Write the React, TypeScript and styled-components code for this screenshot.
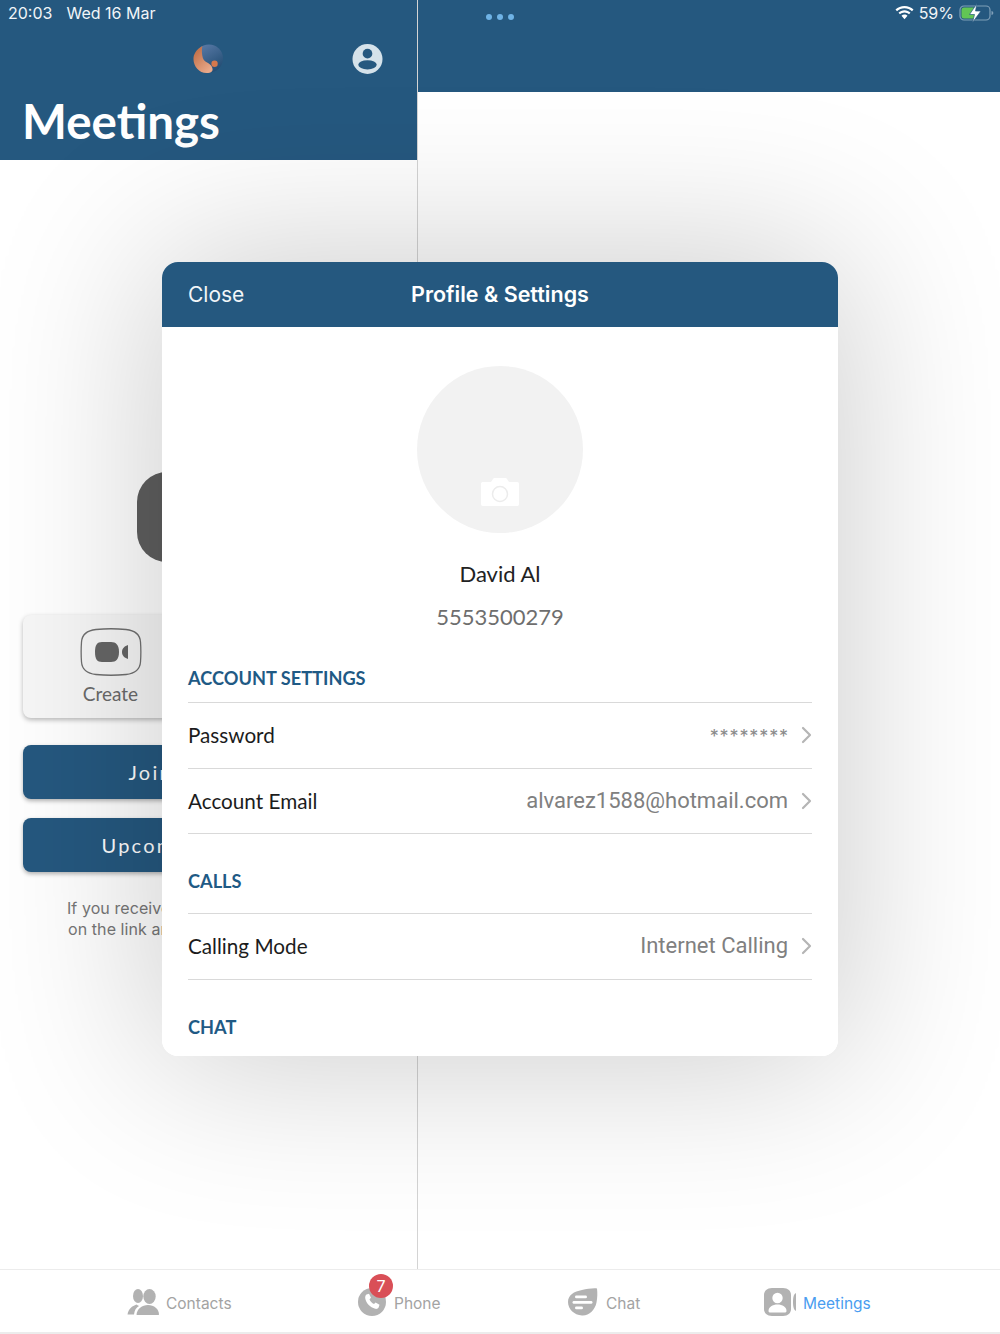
import React from 'react';
import styled, {createGlobalStyle} from 'styled-components';

const BLUE = '#25587f';
const HEADING = '#1f5a85';

const GlobalStyle = createGlobalStyle`
  html, body {
    margin: 0;
    padding: 0;
    background: #fff;
  }
  body {
    font-family: "Lato", "Liberation Sans", sans-serif;
  }
`;

const Screen = styled.div`
  position: relative;
  width: 1000px;
  height: 1334px;
  overflow: hidden;
  background: #fff;
  display: flex;
  flex-direction: column;
`;

const Split = styled.div`
  flex: 1;
  display: flex;
  min-height: 0;
`;

const LeftPane = styled.section`
  width: 417px;
  border-right: 1px solid #d4d4d4;
  display: flex;
  flex-direction: column;
`;

const RightPane = styled.section`
  flex: 1;
`;

const RightHeader = styled.div`
  height: 92px;
  background: ${BLUE};
`;

const LeftHeader = styled.header`
  height: 160px;
  background: ${BLUE};
  box-sizing: border-box;
  padding: 43px 34px 0 22px;
  display: flex;
  flex-direction: column;
`;

const HeaderIcons = styled.div`
  display: flex;
  justify-content: space-between;
  align-items: center;
  padding-left: 171px;
  height: 32px;
`;

const Title = styled.h1`
  margin: 17px 0 0;
  font: 700 47.500px/58px "Lato", sans-serif;
  color: #fff;
`;

const LeftBody = styled.div`
  flex: 1;
  display: flex;
  flex-direction: column;
  align-items: center;
  padding: 312px 23px 0;
`;

const Hero = styled.div`
  width: 143px;
  height: 90px;
  border-radius: 30px;
  background: #5f5f5f;
  margin-left: -1px;
`;

const CreateCard = styled.div`
  align-self: stretch;
  height: 103px;
  margin-top: 53px;
  border-radius: 8px;
  background: #f7f7f7;
  box-shadow: 0 2px 5px rgba(0, 0, 0, 0.28);
  display: flex;
  flex-direction: column;
  align-items: center;
  padding: 13px 196px 0 0;
  box-sizing: border-box;
`;

const CreateLabel = styled.span`
  margin-top: 6px;
  font: 400 19px/24px "Lato", sans-serif;
  color: #6b6b6b;
`;

const BlueButton = styled.div<{$top: number}>`
  align-self: stretch;
  height: 54px;
  margin-top: ${(p) => p.$top}px;
  border-radius: 8px;
  background: ${BLUE};
  box-shadow: 0 2px 4px rgba(0, 0, 0, 0.3);
  color: #fff;
  font: 400 20px/54px "Lato", sans-serif;
  letter-spacing: 2.250px;
  text-align: center;
`;

const Hint = styled.p`
  margin: 26px 0 0;
  font: 400 16px/21px "Inter", "Roboto", sans-serif;
  letter-spacing: 0.080px;
  color: #777;
  text-align: center;
  white-space: nowrap;
`;

const StatusBar = styled.div`
  position: absolute;
  top: 0;
  left: 0;
  right: 0;
  height: 26px;
  display: flex;
  align-items: center;
  justify-content: space-between;
  padding: 0 6px 0 8px;
  box-sizing: border-box;
  color: #f1f5f8;
  font: 400 16px/26px "Inter", "Roboto", sans-serif;
`;

const StatusClock = styled.div`
  display: flex;
  gap: 14px;
`;

const StatusDots = styled.div`
  position: absolute;
  left: 486px;
  top: 14px;
  display: flex;
  gap: 5px;
`;

const Dot = styled.span`
  width: 6px;
  height: 6px;
  border-radius: 50%;
  background: #6fb3e6;
`;

const StatusRight = styled.div`
  display: flex;
  align-items: center;
  gap: 5px;
`;

const TabBar = styled.nav`
  height: 65px;
  flex: none;
  box-sizing: border-box;
  border-top: 1px solid #ececec;
  border-bottom: 2px solid #ececec;
  background: #fff;
  display: grid;
  grid-template-columns: 358px 208px 198px 236px;
`;

const Tab = styled.div<{$pad: number; $gap: number}>`
  display: flex;
  align-items: center;
  gap: ${(p) => p.$gap}px;
  padding-top: 2px;
  padding-left: ${(p) => p.$pad}px;
`;

const TabIcon = styled.span`
  position: relative;
  display: flex;
`;

const TabLabel = styled.span<{$active?: boolean}>`
  font: 400 15.500px/20px "Inter", "Roboto", sans-serif;
  color: ${(p) => (p.$active ? '#4a9df0' : '#a3a3a3')};
  position: relative;
  top: 2px;
`;

const Badge = styled.span`
  position: absolute;
  top: -14px;
  left: 11px;
  width: 24px;
  height: 24px;
  border-radius: 50%;
  background: #d94f57;
  color: #fff;
  font: 400 16px/24px "Inter", sans-serif;
  text-align: center;
`;

const Modal = styled.div`
  position: absolute;
  left: 162px;
  top: 262px;
  width: 676px;
  height: 794px;
  border-radius: 16px;
  overflow: hidden;
  background: #fff;
  display: flex;
  flex-direction: column;
`;

const ModalShadow = styled.div`
  position: absolute;
  left: 162px;
  top: 262px;
  width: 676px;
  height: 794px;
  border-radius: 16px;
  box-shadow: 0 0 170px 10px rgba(0, 0, 0, 0.2);
`;

const ModalHeader = styled.header`
  position: relative;
  flex: none;
  height: 65px;
  background: ${BLUE};
  display: flex;
  align-items: center;
  justify-content: center;
  color: #fff;
`;

const CloseLabel = styled.span`
  position: absolute;
  left: 26px;
  font: 400 21px/28px "Inter", sans-serif;
  color: #f2f5f8;
`;

const ModalTitle = styled.h2`
  margin: 0 0 2px;
  font: 600 21.500px/28px "Inter", sans-serif;
`;

const ModalBody = styled.div`
  flex: 1;
  padding: 39px 26px 0;
  display: flex;
  flex-direction: column;
`;

const Avatar = styled.div`
  width: 166px;
  height: 167px;
  border-radius: 50%;
  background: #f2f2f2;
  align-self: center;
  display: flex;
  justify-content: center;
  padding-top: 111px;
  box-sizing: border-box;
`;

const Name = styled.div`
  margin-top: 27px;
  font: 400 22px/28px "Lato", sans-serif;
  color: #222;
  text-align: center;
`;

const Phone = styled.div`
  margin-top: 15px;
  font: 400 22px/28px "Lato", sans-serif;
  color: #6e6e6e;
  text-align: center;
`;

const SectionTitle = styled.h3<{$top: number; $gap: number}>`
  margin: ${(p) => p.$top}px 0 ${(p) => p.$gap}px;
  font: 700 18.200px/24px "Lato", sans-serif;
  color: ${HEADING};
`;

const Row = styled.div`
  display: flex;
  align-items: center;
  justify-content: space-between;
  box-sizing: border-box;
  height: 65.500px;
  border-top: 1px solid #d9d9d9;
`;

const RowGroup = styled.div`
  border-bottom: 1px solid #d9d9d9;
`;

const RowLabel = styled.span`
  font: 400 20.700px/28px "Lato", sans-serif;
  color: #1c1c1c;
`;

const RowValue = styled.span`
  display: flex;
  align-items: center;
  gap: 13px;
  font: 400 22px/28px "Roboto", sans-serif;
  color: #808080;
`;

const Stars = styled.span`
  font: 400 18px/18px "Inter", sans-serif;
  letter-spacing: 0.9px;
  margin-right: -1px;
  padding-top: 4px;
  color: #8a8a8a;
`;

const Chevron = () => (
  <svg width="11" height="18" viewBox="0 0 11 18" fill="none">
    <path d="M2 2l7 7-7 7" stroke="#b5b5b5" strokeWidth="2.2" strokeLinecap="round" strokeLinejoin="round" />
  </svg>
);

const Logo = () => (
  <svg width="30" height="30" viewBox="0 0 32 32">
    <defs>
      <linearGradient id="orange" x1="0" y1="0" x2="0.7" y2="1">
        <stop offset="0" stopColor="#b9653c" />
        <stop offset="1" stopColor="#e9a98a" />
      </linearGradient>
      <linearGradient id="navy" x1="0.2" y1="0" x2="0.8" y2="1">
        <stop offset="0" stopColor="#5a7ba8" />
        <stop offset="1" stopColor="#1f4a70" />
      </linearGradient>
    </defs>
    <circle cx="17" cy="15.500" r="15" fill="url(#navy)" />
    <path d="M10 2C3 6 .5 11 .5 16c0 8 6 15 14 15 5 0 8-2 5.500-7-2-4-8-4-9.500-9C9.500 11 9 6 10 2z" fill="url(#orange)" />
    <circle cx="23" cy="21" r="3.400" fill="#d5784c" />
  </svg>
);

const ProfileIcon = () => (
  <svg width="31" height="32" viewBox="0 0 32 32">
    <circle cx="16" cy="16" r="15.500" fill="#d5e2ea" />
    <circle cx="16" cy="10.500" r="5" fill={BLUE} />
    <ellipse cx="16" cy="22" rx="9.500" ry="4.800" fill={BLUE} />
  </svg>
);

const Wifi = () => (
  <svg width="19" height="14" viewBox="0 0 19 14" fill="#fff">
    <path d="M9.500 0C6 0 2.900 1.400.5 3.600l1.500 1.600C4 3.300 6.600 2.200 9.500 2.200s5.500 1.100 7.500 3l1.500-1.600C16.100 1.400 13 0 9.500 0z" />
    <path d="M9.500 4.300c-2.300 0-4.400.9-6 2.400L5 8.300c1.200-1.100 2.800-1.800 4.500-1.800s3.300.7 4.500 1.800l1.500-1.600c-1.600-1.500-3.700-2.400-6-2.400z" />
    <path d="M9.500 8.600c-1.200 0-2.200.5-3 1.200l3 3.400 3-3.400c-.8-.7-1.800-1.200-3-1.200z" />
  </svg>
);

const Battery = () => (
  <svg width="35" height="20" viewBox="0 0 35 20">
    <rect x="1" y="3" width="30" height="14" rx="4" fill="none" stroke="#7f9fb8" strokeWidth="1.200" />
    <rect x="2.500" y="4.500" width="14" height="11" rx="2.500" fill="#62c554" />
    <path d="M32.500 8v4c1.200-.3 1.800-1 1.800-2s-.6-1.700-1.800-2z" fill="#7f9fb8" />
    <path d="M18 .5L10.500 11.500h5l-2 8L22 8h-5.500z" fill="#fff" stroke={BLUE} strokeWidth="0.700" />
  </svg>
);

const VideoFrame = () => (
  <svg width="62" height="48" viewBox="0 0 62 48" fill="none">
    <path d="M16 1.500C26 .5 36 .5 46 1.500 55 2.500 60 7 60.500 14c.5 7 .5 13 0 20-.5 7-5.500 11.500-14.500 12.500-10 1-20 1-30 0C7 45.500 2 41 1.500 34 1 27 1 21 1.500 14 2 7 7 2.500 16 1.500z" stroke="#707070" strokeWidth="1.300" />
    <path d="M22 14h9c5 0 8 3 8 10s-3 10-8 10h-9c-5 0-7-3-7-10s2-10 7-10z" fill="#666" />
    <path d="M48 17v14c-3-1-6-3-6-7s3-6 6-7z" fill="#666" />
  </svg>
);

const Camera = () => (
  <svg width="40" height="30" viewBox="0 0 40 30">
    <path d="M3 5h8l2-3c.4-.7 1-1 2-1h10c1 0 1.600.3 2 1l2 3h8c1.500 0 2 .8 2 2v20c0 1.500-.8 2-2 2H3c-1.500 0-2-.8-2-2V7c0-1.500.8-2 2-2z" fill="#fff" />
    <circle cx="20" cy="17" r="7.500" fill="none" stroke="#ececec" strokeWidth="1.500" />
  </svg>
);

const ContactsIcon = () => (
  <svg width="32" height="26" viewBox="0 0 32 26" fill="#b2b2b2">
    <ellipse cx="11" cy="7" rx="5" ry="7" />
    <ellipse cx="22.500" cy="7.500" rx="6.200" ry="7.500" />
    <path d="M9.500 15.500C5 17 1.500 20 .5 25.500H7c.5-4 2-7 5-8.500-1-.5-2-1-2.500-1.500z" />
    <path d="M21 16c-6 0-11 4-11.500 9.500 0 .3.200.5.500.5h21.500c.3 0 .5-.2.5-.5C32 20 27 16 21 16z" />
  </svg>
);

const PhoneIcon = () => (
  <svg width="28" height="28" viewBox="0 0 28 28">
    <circle cx="14" cy="14" r="14" fill="#b2b2b2" />
    <path d="M8.500 6.500l2.500-.8 2 4-1.500 1.500c.6 2 2.500 4 4.500 4.800l1.600-1.500 3.900 2.200-.8 2.500c-.5 1.300-2 2-3.500 1.600-5-1.500-9.500-6-10-10.800-.1-1.500.4-3 1.300-3.500z" fill="#fff" />
  </svg>
);

const ChatIcon = () => (
  <svg width="30" height="28" viewBox="0 0 30 28">
    <path d="M14 2c5-1 11-2 15-1.500.5 4 .5 9-.5 14C27 22 21 28 14 27.500 6 27 0 21 0 14S6 3.500 14 2z" fill="#b2b2b2" />
    <rect x="7" y="7.500" width="12" height="2.800" rx="1.400" fill="#fff" />
    <rect x="4.500" y="13" width="20" height="2.800" rx="1.400" fill="#fff" />
    <rect x="7" y="18.500" width="8" height="2.800" rx="1.400" fill="#fff" />
  </svg>
);

const MeetingsIcon = () => (
  <svg width="32" height="28" viewBox="0 0 32 28">
    <path d="M8 0h11c5 0 8 3 8 7v14c0 4-3 7-8 7H8c-5 0-8-3-8-7V7c0-4 3-7 8-7z" fill="#b2b2b2" />
    <circle cx="13.500" cy="10" r="5.200" fill="#fff" />
    <path d="M4.500 23c0-4 4-6.500 9-6.500s9 2.500 9 6.500c0 1-1 1.500-2 1.500h-14c-1 0-2-.5-2-1.500z" fill="#fff" />
    <path d="M32 5v18c-2-1-3-3.500-3-9s1-8 3-9z" fill="#b2b2b2" />
  </svg>
);

export default function App(): React.ReactElement {
  return (
    <Screen>
      <GlobalStyle />
      <Split>
        <LeftPane>
          <LeftHeader>
            <HeaderIcons>
              <Logo />
              <ProfileIcon />
            </HeaderIcons>
            <Title>Meetings</Title>
          </LeftHeader>
          <LeftBody>
            <Hero />
            <CreateCard>
              <VideoFrame />
              <CreateLabel>Create</CreateLabel>
            </CreateCard>
            <BlueButton $top={27}>Join a Meeting</BlueButton>
            <BlueButton $top={19}>Upcoming Meetings</BlueButton>
            <Hint>
              If you received a meeting invite, click
              <br />
              on the link and you will join it directly
            </Hint>
          </LeftBody>
        </LeftPane>
        <RightPane>
          <RightHeader />
        </RightPane>
      </Split>
      <TabBar>
        <Tab $pad={127} $gap={7}>
          <TabIcon><ContactsIcon /></TabIcon>
          <TabLabel>Contacts</TabLabel>
        </Tab>
        <Tab $pad={0} $gap={8}>
          <TabIcon>
            <PhoneIcon />
            <Badge>7</Badge>
          </TabIcon>
          <TabLabel>Phone</TabLabel>
        </Tab>
        <Tab $pad={2} $gap={8}>
          <TabIcon><ChatIcon /></TabIcon>
          <TabLabel>Chat</TabLabel>
        </Tab>
        <Tab $pad={-2} $gap={7}>
          <TabIcon><MeetingsIcon /></TabIcon>
          <TabLabel $active>Meetings</TabLabel>
        </Tab>
      </TabBar>

      <StatusBar>
        <StatusClock>
          <span>20:03</span>
          <span>Wed 16 Mar</span>
        </StatusClock>
        <StatusRight>
          <Wifi />
          <span>59%</span>
          <Battery />
        </StatusRight>
      </StatusBar>
      <StatusDots>
        <Dot />
        <Dot />
        <Dot />
      </StatusDots>

      <ModalShadow />
      <Modal>
        <ModalHeader>
          <CloseLabel>Close</CloseLabel>
          <ModalTitle>Profile &amp; Settings</ModalTitle>
        </ModalHeader>
        <ModalBody>
          <Avatar>
            <Camera />
          </Avatar>
          <Name>David Al</Name>
          <Phone>5553500279</Phone>
          <SectionTitle $top={35} $gap={12}>ACCOUNT SETTINGS</SectionTitle>
          <RowGroup>
            <Row>
              <RowLabel>Password</RowLabel>
              <RowValue>
                <Stars>********</Stars>
                <Chevron />
              </RowValue>
            </Row>
            <Row>
              <RowLabel>Account Email</RowLabel>
              <RowValue>
                alvarez1588@hotmail.com
                <Chevron />
              </RowValue>
            </Row>
          </RowGroup>
          <SectionTitle $top={35} $gap={20}>CALLS</SectionTitle>
          <RowGroup>
            <Row>
              <RowLabel>Calling Mode</RowLabel>
              <RowValue>
                Internet Calling
                <Chevron />
              </RowValue>
            </Row>
          </RowGroup>
          <SectionTitle $top={35.5} $gap={0}>CHAT</SectionTitle>
        </ModalBody>
      </Modal>
    </Screen>
  );
}
